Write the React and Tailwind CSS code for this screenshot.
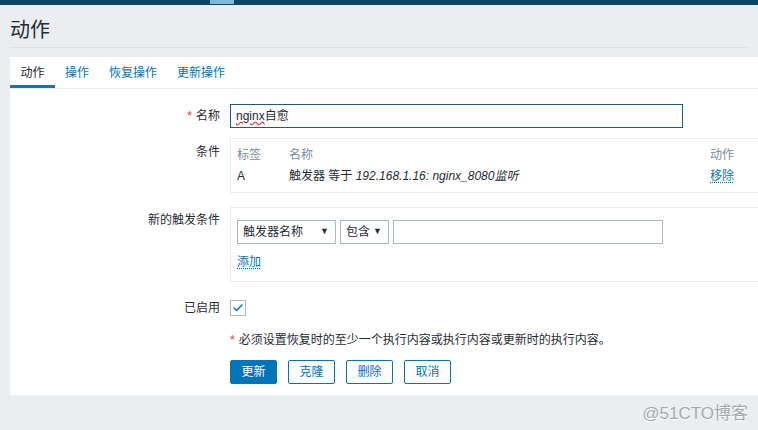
import { Check } from 'lucide-react'

const font = { fontFamily: '"Liberation Sans", "Noto Sans CJK SC", sans-serif' }

function Label({ children, required }) {
    return (
        <div className="w-[210px] shrink-0 pr-0 text-right text-[12px] text-[#1f2c33]">
            {required && <span className="mr-1 text-[#e33734]">*</span>}
            {children}
        </div>
    )
}

function Select({ text, width }) {
    return (
        <div
            className={`flex h-[24px] items-center justify-between border border-[#acbbc2] bg-white pl-[5px] pr-[6px] text-[12px] text-[#1f2c33] ${width}`}
        >
            <span>{text}</span>
            <span className="text-[9px]">▼</span>
        </div>
    )
}

function Button({ children, primary }) {
    return (
        <button
            className={
                primary
                    ? 'h-[24px] w-[47px] rounded-[2px] border border-[#0275b8] bg-[#0275b8] text-[12px] text-white'
                    : 'h-[24px] w-[47px] rounded-[2px] border border-[#0275b8] bg-white text-[12px] text-[#0275b8]'
            }
        >
            {children}
        </button>
    )
}

export default function App() {
    return (
        <div className="h-[430px] w-[758px] overflow-hidden bg-[#ebeef0]" style={font}>
            <div className="flex h-[5px] bg-[#0a466a]">
                <div className="ml-[210px] h-[4px] w-[24px] bg-[#7fb6dc]" />
            </div>
            <div className="mx-[10px] h-[43px] border-b border-[#dde1e4] pt-[13px] text-[20px] leading-[24px] text-[#1f2c33]">
                动作
            </div>
            <div className="ml-[10px] mt-[9px] h-[338px] bg-white">
                <div className="flex h-[32px] border-b border-[#ebeef0] text-[12px]">
                    <div className="flex h-full w-[45px] items-center justify-center border-b-[3px] border-[#1f6fa8] pt-[3px] text-[#1f2c33]">
                        动作
                    </div>
                    <div className="flex h-full items-center px-[10px] text-[#0275b8]">操作</div>
                    <div className="flex h-full items-center px-[10px] text-[#0275b8]">恢复操作</div>
                    <div className="flex h-full items-center px-[10px] text-[#0275b8]">更新操作</div>
                </div>

                <div className="pt-[15px]">
                    <div className="flex items-center gap-[10px]">
                        <Label required>名称</Label>
                        <div className="flex h-[24px] w-[453px] items-center border border-[#1f5b80] px-[5px] text-[12px] text-[#1f2c33]">
                            <span className="underline decoration-[#e33734] decoration-wavy">nginx</span>
                            <span>自愈</span>
                        </div>
                    </div>

                    <div className="mt-[10px] flex gap-[10px]">
                        <div className="pt-[5px]">
                            <Label>条件</Label>
                        </div>
                        <div className="h-[55px] flex-1 border border-r-0 border-[#ebeef0] px-[6px] pt-[6px] text-[12px]">
                            <div className="flex h-[20px] items-center text-[#768d99]">
                                <span className="w-[52px]">标签</span>
                                <span className="flex-1">名称</span>
                                <span className="w-[42px]">动作</span>
                            </div>
                            <div className="flex h-[22px] items-center text-[#1f2c33]">
                                <span className="w-[52px]">A</span>
                                <span className="flex-1">
                                    触发器 等于 <i>192.168.1.16: nginx_8080监听</i>
                                </span>
                                <span className="w-[42px] text-[#0275b8] underline decoration-dotted underline-offset-2">移除</span>
                            </div>
                        </div>
                    </div>

                    <div className="mt-[14px] flex gap-[10px]">
                        <div className="pt-[4px]">
                            <Label>新的触发条件</Label>
                        </div>
                        <div className="h-[75px] flex-1 border border-r-0 border-[#ebeef0] px-[6px] pt-[12px]">
                            <div className="flex gap-[4px]">
                                <Select text="触发器名称" width="w-[99px]" />
                                <Select text="包含" width="w-[49px]" />
                                <div className="h-[24px] w-[270px] border border-[#acbbc2]" />
                            </div>
                            <div className="mt-[9px] text-[12px]">
                                <span className="text-[#0275b8] underline decoration-dotted underline-offset-2">添加</span>
                            </div>
                        </div>
                    </div>

                    <div className="mt-[17px] flex items-center gap-[10px]">
                        <Label>已启用</Label>
                        <div className="flex h-[16px] w-[16px] items-center justify-center border border-[#acbbc2]">
                            <Check size={12} strokeWidth={3} color="#0275b8" />
                        </div>
                    </div>

                    <div className="mt-[14px] pl-[220px] text-[12px] text-[#1f2c33]">
                        <span className="mr-1 text-[#e33734]">*</span>
                        必须设置恢复时的至少一个执行内容或执行内容或更新时的执行内容。
                    </div>

                    <div className="mt-[11px] flex gap-[11px] pl-[220px]">
                        <Button primary>更新</Button>
                        <Button>克隆</Button>
                        <Button>删除</Button>
                        <Button>取消</Button>
                    </div>
                </div>
            </div>
            <div className="mr-[10px] mt-[6px] text-right text-[17px] text-[#a5a9ad] [text-shadow:0_1px_0_#fff]">
                @51CTO博客
            </div>
        </div>
    )
}
